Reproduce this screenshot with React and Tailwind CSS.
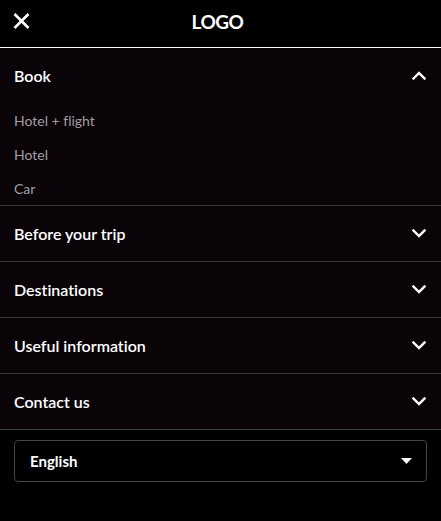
import React from "react";

const Chevron = ({ up }) => (
  <svg width="14" height="9" viewBox="0 0 14 9" fill="none" className="mr-[1px]">
    {up ? (
      <path d="M1.5 7.5 L7 2 L12.5 7.5" stroke="white" strokeWidth="2.4" strokeLinecap="square" />
    ) : (
      <path d="M1.5 1.5 L7 7 L12.5 1.5" stroke="white" strokeWidth="2.4" strokeLinecap="square" />
    )}
  </svg>
);

const Row = ({ label }) => (
  <div className="flex h-[56px] items-center justify-between border-t border-[#3c3a3c] px-[14px]">
    <span className="text-[16px] font-semibold text-white">{label}</span>
    <Chevron />
  </div>
);

export default function App() {
  return (
    <div
      className="flex h-[521px] w-[441px] flex-col bg-black [font-variant-ligatures:none]"
      style={{ fontFamily: "Lato, 'Noto Sans', sans-serif" }}
    >
      <header className="relative flex h-[48px] items-center justify-center border-b border-white bg-black pb-[2px]">
        <svg
          className="absolute left-[13px] top-[13px]"
          width="17"
          height="16"
          viewBox="0 0 17 16"
          fill="none"
        >
          <path d="M1.5 1 L15.5 15 M15.5 1 L1.5 15" stroke="white" strokeWidth="2.6" />
        </svg>
        <span className="mr-[6px] text-[19px] font-bold tracking-[-0.5px] text-white">LOGO</span>
      </header>
      <div className="bg-[#0a0307]">
        <div className="flex h-[55px] items-center justify-between px-[14px]">
          <span className="text-[16px] font-semibold text-white">Book</span>
          <Chevron up />
        </div>
        <div className="flex flex-col">
          <div className="flex h-[34px] items-center px-[14px] text-[14px] text-[#a19fa1]">Hotel + flight</div>
          <div className="flex h-[34px] items-center px-[14px] text-[14px] text-[#a19fa1]">Hotel</div>
          <div className="flex h-[34px] items-center px-[14px] text-[14px] text-[#a19fa1]">Car</div>
        </div>
        <Row label="Before your trip" />
        <Row label="Destinations" />
        <Row label="Useful information" />
        <Row label="Contact us" />
      </div>
      <div className="border-t border-[#3c3a3c] px-[14px] pt-[10px]">
        <div className="flex h-[42px] items-center justify-between rounded-[4px] border border-[#454345] pl-[15px] pr-[14px]">
          <span className="text-[15px] font-bold text-white">English</span>
          <svg width="11" height="6" viewBox="0 0 11 6">
            <path d="M0 0 L11 0 L5.5 6 Z" fill="white" />
          </svg>
        </div>
      </div>
    </div>
  );
}
